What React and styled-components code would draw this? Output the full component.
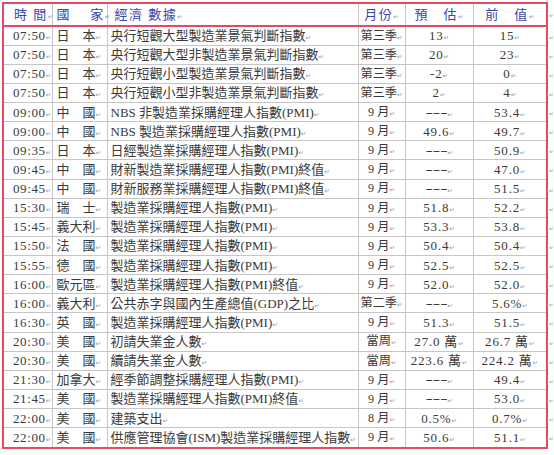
import React from 'react';
import styled, { createGlobalStyle } from 'styled-components';

const GlobalStyle = createGlobalStyle`
  html, body {
    margin: 0;
    padding: 0;
    background: #ffffff;
  }
  body {
    font-family: "Liberation Serif", "Noto Sans CJK TC", serif;
    color: #3a3a3a;
  }
`;

const Page = styled.div`
  display: flex;
  align-items: flex-start;
  padding: 2px 0 0 2px;
`;

const Frame = styled.div`
  border: 2px solid #e44a64;
`;

const Table = styled.table`
  border-collapse: collapse;
  table-layout: fixed;
  width: 542px;
`;

const HeadRow = styled.tr`
  height: 22px;
`;

const BodyRow = styled.tr`
  height: 19.14px;
`;

const HeadCell = styled.th`
  padding: 0 0 0 ${p => p.$pad || 0}px;
  text-align: ${p => p.$align || 'left'};
  vertical-align: middle;
  font-weight: 400;
  font-size: 13px;
  line-height: 1;
  letter-spacing: 1.5px;
  color: #3a46aa;
  border-right: 1px solid #c6c6c6;
  border-bottom: 2px solid #e44a64;
  white-space: nowrap;
  &:last-child { border-right: none; }
`;

const Cell = styled.td`
  padding: 0 0 0 ${p => p.$pad || 0}px;
  text-align: ${p => p.$align || 'left'};
  vertical-align: middle;
  font-weight: 400;
  font-size: ${p => p.$size || 13}px;
  letter-spacing: ${p => p.$spacing || 0}px;
  line-height: 1;
  color: #3a3a3a;
  border-right: 1px solid #c6c6c6;
  border-bottom: 1px solid #c6c6c6;
  white-space: nowrap;
  &:last-child { border-right: none; }
  tr:last-child > & { border-bottom: none; }
`;

const Pm = styled.span`
  font-family: "DejaVu Sans", sans-serif;
  font-size: 6.5px;
  letter-spacing: 0;
  color: #8e92ab;
`;

const Dash = styled.span`
  display: inline-block;
  letter-spacing: 0;
  transform: scaleX(1.7);
  margin: 0 4.5px;
`;

const MarkColumn = styled.div`
  display: flex;
  flex-direction: column;
  padding-top: 2px;
  width: 5px;
  overflow: hidden;
`;

const RowMark = styled.div`
  height: ${p => p.$h}px;
  display: flex;
  align-items: center;
  font-family: "DejaVu Sans", sans-serif;
  font-size: 6.5px;
  color: #8e92ab;
  padding-left: 1px;
`;

const rows = [
  ['07:50', '日\u3000本', '央行短觀大型製造業景氣判斷指數', '第三季', '13', '15'],
  ['07:50', '日\u3000本', '央行短觀大型非製造業景氣判斷指數', '第三季', '20', '23'],
  ['07:50', '日\u3000本', '央行短觀小型製造業景氣判斷指數', '第三季', '-2', '0'],
  ['07:50', '日\u3000本', '央行短觀小型非製造業景氣判斷指數', '第三季', '2', '4'],
  ['09:00', '中\u3000國', 'NBS 非製造業採購經理人指數(PMI)', '9 月', '---', '53.4'],
  ['09:00', '中\u3000國', 'NBS 製造業採購經理人指數(PMI)', '9 月', '49.6', '49.7'],
  ['09:35', '日\u3000本', '日經製造業採購經理人指數(PMI)', '9 月', '---', '50.9'],
  ['09:45', '中\u3000國', '財新製造業採購經理人指數(PMI)終值', '9 月', '---', '47.0'],
  ['09:45', '中\u3000國', '財新服務業採購經理人指數(PMI)終值', '9 月', '---', '51.5'],
  ['15:30', '瑞\u3000士', '製造業採購經理人指數(PMI)', '9 月', '51.8', '52.2'],
  ['15:45', '義大利', '製造業採購經理人指數(PMI)', '9 月', '53.3', '53.8'],
  ['15:50', '法\u3000國', '製造業採購經理人指數(PMI)', '9 月', '50.4', '50.4'],
  ['15:55', '德\u3000國', '製造業採購經理人指數(PMI)', '9 月', '52.5', '52.5'],
  ['16:00', '歐元區', '製造業採購經理人指數(PMI)終值', '9 月', '52.0', '52.0'],
  ['16:00', '義大利', '公共赤字與國內生產總值(GDP)之比', '第二季', '---', '5.6%'],
  ['16:30', '英\u3000國', '製造業採購經理人指數(PMI)', '9 月', '51.3', '51.5'],
  ['20:30', '美\u3000國', '初請失業金人數', '當周', '27.0 萬', '26.7 萬'],
  ['20:30', '美\u3000國', '續請失業金人數', '當周', '223.6 萬', '224.2 萬'],
  ['21:30', '加拿大', '經季節調整採購經理人指數(PMI)', '9 月', '---', '49.4'],
  ['21:45', '美\u3000國', '製造業採購經理人指數(PMI)終值', '9 月', '---', '53.0'],
  ['22:00', '美\u3000國', '建築支出', '8 月', '0.5%', '0.7%'],
  ['22:00', '美\u3000國', '供應管理協會(ISM)製造業採購經理人指數', '9 月', '50.6', '51.1'],
];

function Value({ text }) {
  if (text === '---') return <Dash>{text}</Dash>;
  return text;
}

export default function App() {
  return (
    <>
      <GlobalStyle />
      <Page>
        <Frame>
          <Table>
            <colgroup>
              <col style={{ width: 48 }} />
              <col style={{ width: 55 }} />
              <col style={{ width: 251 }} />
              <col style={{ width: 47 }} />
              <col style={{ width: 68 }} />
              <col style={{ width: 73 }} />
            </colgroup>
            <thead>
              <HeadRow>
                <HeadCell $pad={10}>時 間<Pm>↵</Pm></HeadCell>
                <HeadCell $pad={4}>國 {'\u3000'}家<Pm>↵</Pm></HeadCell>
                <HeadCell $pad={7}>經濟 數據<Pm>↵</Pm></HeadCell>
                <HeadCell $align="center">月份<Pm>↵</Pm></HeadCell>
                <HeadCell $align="center">預{'\u3000'}估<Pm>↵</Pm></HeadCell>
                <HeadCell $align="center">前{'\u3000'}值<Pm>↵</Pm></HeadCell>
              </HeadRow>
            </thead>
            <tbody>
              {rows.map((r, i) => (
                <BodyRow key={i}>
                  <Cell $pad={9} $spacing={0.6}>{r[0]}<Pm>↵</Pm></Cell>
                  <Cell $pad={4}>{r[1]}<Pm>↵</Pm></Cell>
                  <Cell $pad={3} $size={13}>{r[2]}<Pm>↵</Pm></Cell>
                  <Cell $align="center" $size={12.2}>{r[3]}<Pm>↵</Pm></Cell>
                  <Cell $align="center" $spacing={0.8}><Value text={r[4]} /><Pm>↵</Pm></Cell>
                  <Cell $align="center" $spacing={0.8}><Value text={r[5]} /><Pm>↵</Pm></Cell>
                </BodyRow>
              ))}
            </tbody>
          </Table>
        </Frame>
        <MarkColumn>
          <RowMark $h={24}>↵</RowMark>
          {rows.map((r, i) => (
            <RowMark key={i} $h={19.14}>↵</RowMark>
          ))}
        </MarkColumn>
      </Page>
    </>
  );
}
